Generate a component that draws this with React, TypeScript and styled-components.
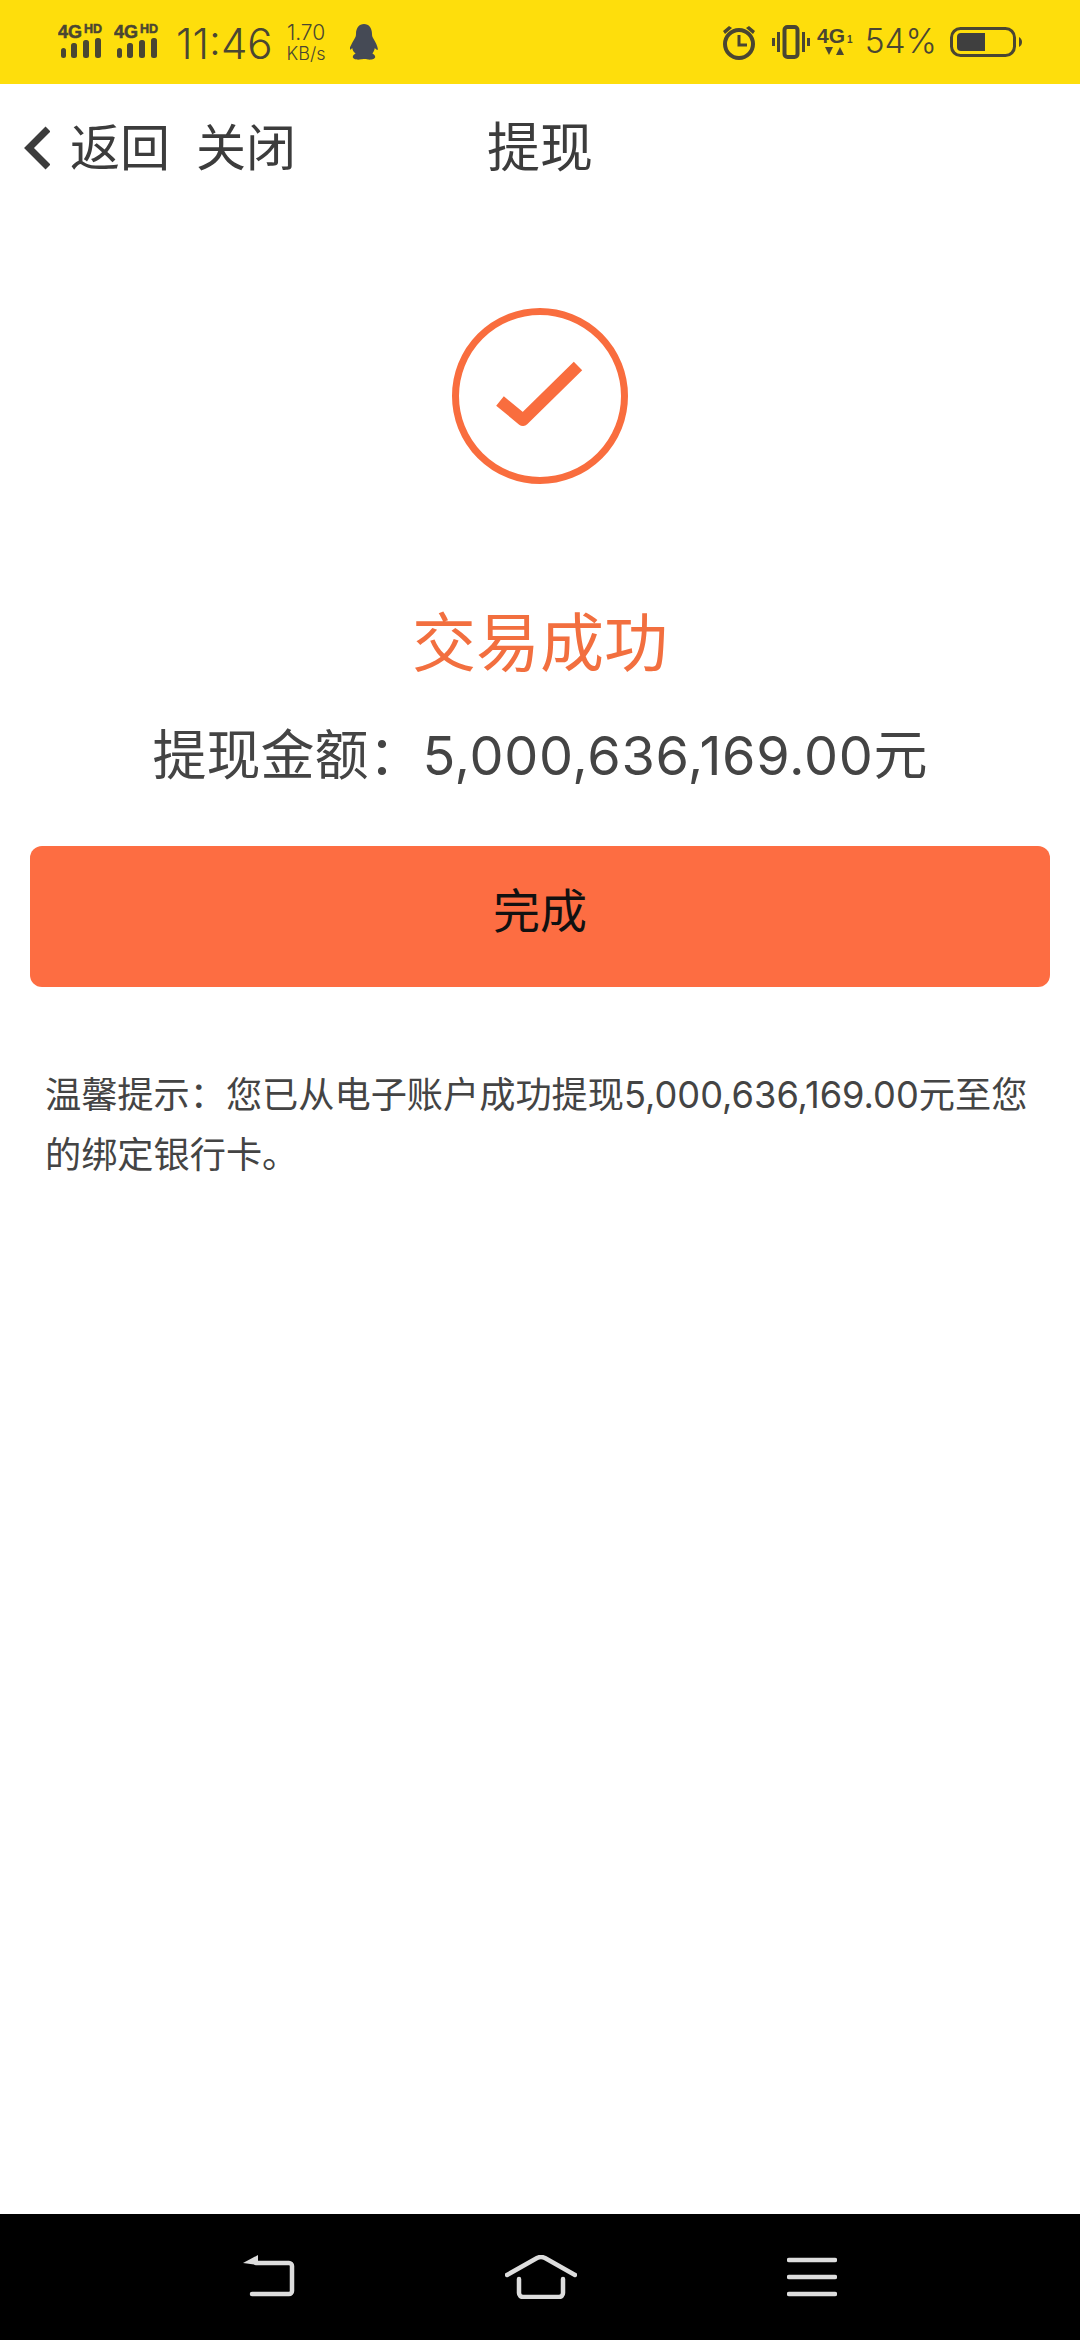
import React from 'react';
import styled, { createGlobalStyle } from 'styled-components';

const GlobalStyle = createGlobalStyle`
  html, body {
    margin: 0;
    padding: 0;
    background: #ffffff;
  }
  * {
    box-sizing: border-box;
  }
  body {
    font-family: Inter, "Noto Sans CJK SC", sans-serif;
  }
`;

const Page = styled.div`
  width: 1080px;
  height: 2340px;
  display: flex;
  flex-direction: column;
  background: #fff;
  overflow: hidden;
`;

const StatusBar = styled.div`
  height: 84px;
  flex: none;
  background: #fede0c;
  color: #4a4632;
  display: flex;
  align-items: center;
  justify-content: space-between;
  padding: 0 58px 0 58px;
`;

const StatusGroup = styled.div`
  display: flex;
  align-items: center;
`;

const IconSlot = styled.span<{ $left: number }>`
  display: flex;
  margin-left: ${(p) => p.$left}px;
`;

const Clock = styled.span`
  font-size: 42px;
  font-weight: 300;
  line-height: 1;
  margin: 4px 0 0 16px;
`;

const NetSpeed = styled.div`
  display: flex;
  flex-direction: column;
  align-items: center;
  font-size: 21px;
  font-weight: 300;
  line-height: 21px;
  margin: 2px 0 0 14px;

  span:last-child {
    font-size: 18px;
  }
`;

const BatteryText = styled.span`
  font-size: 33.500px;
  font-weight: 300;
  line-height: 1;
  margin: 0 13px 0 12px;
`;

const NavBar = styled.div`
  height: 128px;
  flex: none;
  display: grid;
  grid-template-columns: 1fr auto 1fr;
  align-items: center;
  padding: 0 24px;
  color: #3c3c3c;
`;

const NavLeft = styled.div`
  display: flex;
  align-items: center;
  font-size: 50px;
`;

const NavLink = styled.span<{ $gap: number }>`
  margin-left: ${(p) => p.$gap}px;
  line-height: 1;
`;

const NavTitle = styled.div`
  font-size: 53px;
  line-height: 1;
`;

const Content = styled.div`
  flex: 1;
  display: flex;
  flex-direction: column;
  align-items: center;
  padding-top: 96px;
`;

const ResultTitle = styled.div`
  margin-top: 123px;
  font-size: 64px;
  line-height: 72px;
  color: #f26f3f;
`;

const Amount = styled.div`
  margin-top: 45px;
  font-size: 54px;
  line-height: 64px;
  color: #444;
`;

const AmountNumber = styled.span`
  letter-spacing: 0.7px;
`;

const DoneButton = styled.button`
  width: 1020px;
  height: 141px;
  margin-top: 58px;
  padding: 0 0 18px;
  border: 0;
  border-radius: 12px;
  background: #fd6d42;
  color: #111;
  font-family: inherit;
  font-size: 47px;
`;

const Tip = styled.p`
  width: 1000px;
  margin: 78px 0 0;
  padding-left: 5px;
  font-size: 36.200px;
  line-height: 60px;
  color: #444;
`;

const BottomBar = styled.div`
  height: 126px;
  flex: none;
  background: #000;
  display: flex;
  align-items: center;
  justify-content: center;
  gap: 210px;
`;

const SignalIcon = () => (
  <svg width="46" height="38" viewBox="0 0 46 38" fill="#4a4632">
    <text x="0" y="15" fontFamily="Liberation Sans" fontWeight="700" fontSize="18" stroke="#4a4632" strokeWidth="0.5">4G</text>
    <text x="26" y="10" fontFamily="Liberation Sans" fontWeight="700" fontSize="12.500" stroke="#4a4632" strokeWidth="0.5">HD</text>
    <rect x="3" y="25" width="5" height="10" rx="2.500" />
    <rect x="13" y="20" width="6" height="15" rx="2.500" />
    <rect x="25" y="17" width="6" height="18" rx="2.500" />
    <rect x="37" y="15" width="6" height="20" rx="2.500" />
  </svg>
);

const PenguinIcon = () => (
  <svg width="28" height="36" viewBox="0 0 28 36" fill="#454a55">
    <path d="M14 0c5 0 8 4 8 10 0 2 .6 3.400 1.600 5 2 3 3.800 7 4.400 10.500-.8.700-2 0-3.200-1.500-.4 2-1.200 4-2.400 5.500 1.600 1 2.800 2 2.800 3.500 0 2-4 3-7 2.500-1.800-.3-3-.5-4.200-.5s-2.400.2-4.200.5c-3 .5-7-.5-7-2.500 0-1.500 1.200-2.500 2.800-3.500C3.400 28 2.600 26 2.200 24c-1.200 1.500-2.400 2.200-3.200 1.500C.600 22 2.400 18 4.400 15 5.400 13.400 6 12 6 10 6 4 9 0 14 0z" />
  </svg>
);

const AlarmIcon = () => (
  <svg width="36" height="36" viewBox="0 0 36 36" fill="none" stroke="#4a4632">
    <circle cx="18" cy="20" r="14" strokeWidth="4" />
    <path d="M18 11v10h8" strokeWidth="3" />
    <path d="M2 7l6-5 3 2-7 6zM34 7l-6-5-3 2 7 6z" fill="#4a4632" strokeWidth="0" />
  </svg>
);

const VibrateIcon = () => (
  <svg width="38" height="34" viewBox="0 0 38 34" fill="none" stroke="#4a4632">
    <rect x="12.500" y="2" width="13" height="30" rx="3" strokeWidth="4" />
    <path d="M6.500 7v20M1.500 13v8M31.500 7v20M36.500 13v8" strokeWidth="3" />
  </svg>
);

const DataIcon = () => (
  <svg width="36" height="34" viewBox="0 0 36 34" fill="#4a4632">
    <text x="0" y="18" fontFamily="Liberation Sans" fontWeight="700" fontSize="21">4G</text>
    <text x="30" y="18" fontFamily="Liberation Sans" fontWeight="700" fontSize="10">1</text>
    <path d="M8 22h8l-4 8zM19 30l4-8 4 8z" />
  </svg>
);

const BatteryIcon = () => (
  <svg width="72" height="30" viewBox="0 0 72 30" fill="none">
    <rect x="1.500" y="1.500" width="63" height="27" rx="9" stroke="#4a4632" strokeWidth="3" />
    <path d="M11 6h24v18H11a4 4 0 0 1-4-4V10a4 4 0 0 1 4-4z" fill="#3f3f3f" />
    <path d="M69 10c2 1 3 3 3 5s-1 4-3 5z" fill="#4a4632" />
  </svg>
);

const BackChevron = () => (
  <svg width="26" height="44" viewBox="0 0 26 44" fill="none">
    <path d="M24 3L5 22l19 19" stroke="#3c3c3c" strokeWidth="7" />
  </svg>
);

const SuccessIcon = () => (
  <svg width="176" height="176" viewBox="0 0 176 176" fill="none" stroke="#f96d3e">
    <circle cx="88" cy="88" r="84.500" strokeWidth="7" />
    <path d="M48 93l23 19 55-54" strokeWidth="12" strokeLinejoin="round" />
  </svg>
);

const NavBack = () => (
  <svg width="52" height="44" viewBox="0 0 52 44" fill="none" stroke="#ddd" strokeWidth="4.500" strokeLinecap="round">
    <path d="M13 8h33a3 3 0 0 1 3 3v25a3 3 0 0 1-3 3H9" />
    <path d="M0 8l15-8v10z" fill="#ddd" stroke="none" />
  </svg>
);

const NavHome = () => (
  <svg width="72" height="44" viewBox="0 0 72 44" fill="none" stroke="#ddd" strokeWidth="4.500" strokeLinecap="round">
    <path d="M2 20L32 3q4-2 8 0l30 17" />
    <path d="M14 24v14a4 4 0 0 0 4 4h36a4 4 0 0 0 4-4V24" />
  </svg>
);

const NavMenu = () => (
  <svg width="50" height="40" viewBox="0 0 50 40" stroke="#ddd" strokeWidth="4.500" strokeLinecap="round">
    <path d="M2 3h46M2 20h46M2 37h46" />
  </svg>
);

export default function App() {
  return (
    <Page>
      <GlobalStyle />
      <StatusBar>
        <StatusGroup>
          <SignalIcon />
          <IconSlot $left={10}>
            <SignalIcon />
          </IconSlot>
          <Clock>11:46</Clock>
          <NetSpeed>
            <span>1.70</span>
            <span>KB/s</span>
          </NetSpeed>
          <IconSlot $left={24}>
            <PenguinIcon />
          </IconSlot>
        </StatusGroup>
        <StatusGroup>
          <AlarmIcon />
          <IconSlot $left={15}>
            <VibrateIcon />
          </IconSlot>
          <IconSlot $left={7}>
            <DataIcon />
          </IconSlot>
          <BatteryText>54%</BatteryText>
          <BatteryIcon />
        </StatusGroup>
      </StatusBar>
      <NavBar>
        <NavLeft>
          <BackChevron />
          <NavLink $gap={20}>返回</NavLink>
          <NavLink $gap={26}>关闭</NavLink>
        </NavLeft>
        <NavTitle>提现</NavTitle>
        <div />
      </NavBar>
      <Content>
        <SuccessIcon />
        <ResultTitle>交易成功</ResultTitle>
        <Amount>
          提现金额：<AmountNumber>5,000,636,169.00</AmountNumber>元
        </Amount>
        <DoneButton>完成</DoneButton>
        <Tip>温馨提示：您已从电子账户成功提现5,000,636,169.00元至您的绑定银行卡。</Tip>
      </Content>
      <BottomBar>
        <NavBack />
        <NavHome />
        <NavMenu />
      </BottomBar>
    </Page>
  );
}
